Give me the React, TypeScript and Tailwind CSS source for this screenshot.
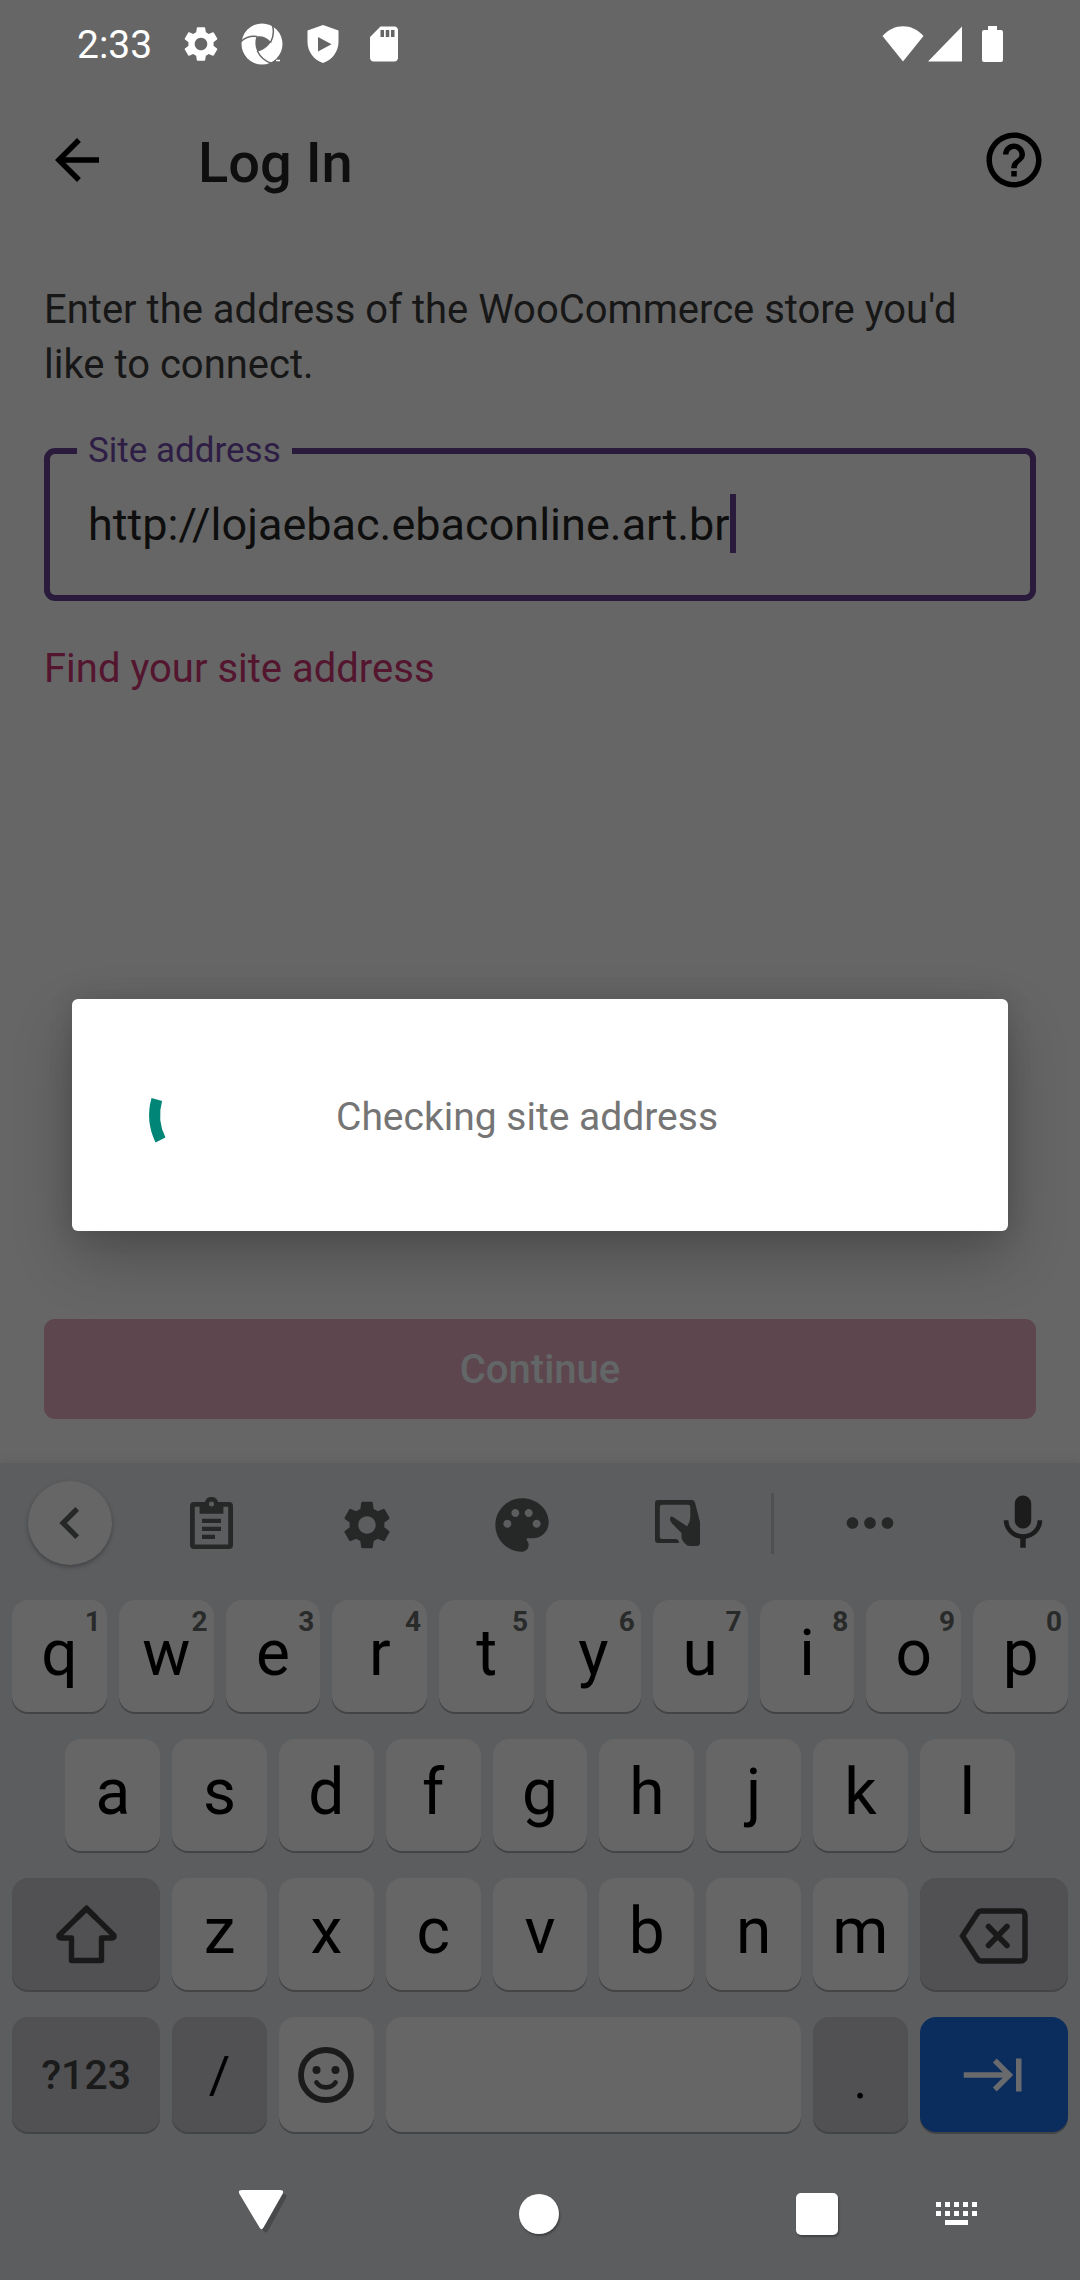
import React from "react";
import {
  MdArrowBack,
  MdChevronLeft,
  MdHelpOutline,
  MdKeyboardTab,
  MdMic,
  MdMoreHoriz,
  MdPalette,
  MdSdCard,
  MdSettings,
} from "react-icons/md";

function SwirlIcon() {
  return (
    <svg width="42" height="42" viewBox="0 0 42 42" fill="none" aria-hidden="true">
      <circle cx="21" cy="21" r="20.5" fill="#fff" />
      <path d="M15.500 13.500C21 12.500 26 14.500 29.800 19C27 23.500 22 27.500 16.500 28.500C14 24 13.800 18 15.500 13.500Z" fill="#666" />
      <path d="M0 18.500C5 14 11 12.600 16 13.600M29.500 19.600C32.300 14.500 33 8 31.500 2.500M16.300 28C19 33.500 24 38.500 31 40.500" stroke="#666" strokeWidth="1.500" />
      <path d="M35 37.500H39" stroke="#fff" strokeWidth="1.500" />
    </svg>
  );
}

function ShieldPlayIcon() {
  return (
    <svg width="42" height="42" viewBox="0 0 42 42" aria-hidden="true">
      <path
        fill="#fff"
        fillRule="evenodd"
        d="M21 2L36.500 7.500V19C36.500 28 30.500 37 21 40C11.500 37 5.500 28 5.500 19V7.500ZM16 14V28.500L29.500 21.200Z"
      />
    </svg>
  );
}

function StatusBar() {
  return (
    <header className="flex h-[83px] items-center pl-[77px] pr-[77px] pt-1 text-white">
      <time className="pt-0.5 text-[39px] leading-[44px]">2:33</time>
      <div className="ml-7 flex items-center gap-[19px]">
        <MdSettings size={42} />
        <SwirlIcon />
        <ShieldPlayIcon />
        <MdSdCard size={42} />
      </div>
      <div className="ml-auto flex items-center">
        <svg width="42" height="36" viewBox="0 0 42 36" fill="currentColor" aria-label="Wi-Fi">
          <path d="M0.500 10C12-3 30-3 41.500 10L21 35.500Z" />
        </svg>
        <svg className="ml-1" width="34" height="36" viewBox="0 0 34 36" fill="currentColor" aria-label="Signal">
          <path d="M0 35.500H34V0.500Z" />
        </svg>
        <svg className="ml-5" width="21" height="36" viewBox="0 0 21 36" fill="currentColor" aria-label="Battery">
          <path d="M6 0H15V4H19A2 2 0 0 1 21 6V34A2 2 0 0 1 19 36H2A2 2 0 0 1 0 34V6A2 2 0 0 1 2 4H6Z" />
        </svg>
      </div>
    </header>
  );
}

function ClipboardIcon() {
  return (
    <svg width="43" height="52" viewBox="0 0 43 52" fill="currentColor" fillRule="evenodd" aria-hidden="true">
      <path d="M4 5H15A6.700 6.700 0 0 1 28 5H39A4 4 0 0 1 43 9V48A4 4 0 0 1 39 52H4A4 4 0 0 1 0 48V9A4 4 0 0 1 4 5ZM4.800 9.700V47.500H38.200V9.700H33.400V16.700H9.600V9.700ZM21.500 4.500A2.500 2.500 0 1 0 21.500 9.500A2.500 2.500 0 1 0 21.500 4.500Z" />
      <path d="M12 21.700H31V26H12ZM12 29.700H31V34H12ZM12 37.700H25V42H12Z" />
    </svg>
  );
}

function HandwritingIcon() {
  return (
    <svg width="45" height="46" viewBox="0 0 45 46" fill="currentColor" fillRule="evenodd" aria-hidden="true">
      <path d="M3 0H37Q39.500 0 40 2.500L45 22V42.500Q45 46 41.500 46H35Q32 46 30 43.500Q26.500 40 26.500 37V33L17 23.500Q15 21.500 15 19Q15 15.500 18 17L32 26.300Q35.300 22 35.300 17V7Q35.300 4.700 33 4.700H7.300Q4.800 4.700 4.800 7V36.500Q4.800 39 7.300 39H21Q24 39.500 24 43H3Q0 43 0 40V3Q0 0 3 0Z" />
    </svg>
  );
}

function ShiftIcon() {
  return (
    <svg width="61" height="60" viewBox="0 0 61 60" fill="none" stroke="currentColor" strokeWidth="5.400" aria-hidden="true">
      <path strokeLinejoin="round" d="M30.500 4.500L58 31.500Q58.500 34 56 34H45.500V56.500H15.500V34H5Q2.500 34 3 31.500Z" />
      <path d="M20.500 14.300L30.500 4.500L40.500 14.300" />
    </svg>
  );
}

function BackspaceIcon() {
  return (
    <svg width="69" height="56" viewBox="0 0 69 56" fill="none" stroke="currentColor" strokeWidth="5.500" aria-hidden="true">
      <path d="M22 3H62A4 4 0 0 1 66 7V49A4 4 0 0 1 62 53H22Q20 53 18.500 51L3.500 28L18.500 5Q20 3 22 3Z" />
      <path strokeLinecap="round" d="M29.500 18.500L48 37.500M48 18.500L29.500 37.500" />
    </svg>
  );
}

function SmileIcon() {
  return (
    <svg width="56" height="56" viewBox="0 0 56 56" fill="none" stroke="currentColor" aria-hidden="true">
      <circle cx="28" cy="28" r="25" strokeWidth="5.800" />
      <circle cx="18.500" cy="23" r="4" fill="currentColor" stroke="none" />
      <circle cx="37.500" cy="23" r="4" fill="currentColor" stroke="none" />
      <path strokeWidth="4.800" strokeLinecap="round" d="M18.500 35.500C23 42 33 42 37.500 35.500" />
    </svg>
  );
}

type KeyProps = { label: string; className: string; children?: React.ReactNode };

function Key({ label, className, children }: KeyProps) {
  return (
    <button
      type="button"
      aria-label={label}
      className={`relative mx-1.5 flex items-center justify-center rounded-2xl shadow-[0_2px_0_#434445] ${className}`}
    >
      {children}
    </button>
  );
}

function LetterKey({ letter, hint, start }: { letter: string; hint?: string; start?: boolean }) {
  return (
    <Key
      label={letter}
      className={`h-28 bg-[#666] pb-1 text-[64px] leading-[64px] text-black ${start ? "col-span-2 col-start-2" : "col-span-2"}`}
    >
      {letter}
      {hint && (
        <span className="absolute right-1.5 top-2 text-[28px] font-bold leading-7 text-[#292a2a]">{hint}</span>
      )}
    </Key>
  );
}

function ToolButton({ label, className, children }: KeyProps) {
  return (
    <button type="button" aria-label={label} className={`flex h-[84px] items-center justify-center ${className}`}>
      {children}
    </button>
  );
}

function Keyboard() {
  return (
    <section
      aria-label="Keyboard"
      className="bg-[#5c5d5f] pb-4 pt-[18px] text-[#262827] shadow-[0_-2px_10px_rgba(0,0,0,0.06)]"
    >
      <div className="flex items-center pl-7">
        <ToolButton label="Back" className="w-[84px] rounded-full bg-[#666] shadow-[0_2px_4px_rgba(0,0,0,0.3)]">
          <MdChevronLeft size={64} />
        </ToolButton>
        <div className="ml-[22px] flex flex-1">
          <ToolButton label="Clipboard" className="flex-1">
            <ClipboardIcon />
          </ToolButton>
          <ToolButton label="Settings" className="flex-1 pt-1">
            <MdSettings size={58} />
          </ToolButton>
          <ToolButton label="Themes" className="flex-1 pt-1">
            <MdPalette size={64} />
          </ToolButton>
          <ToolButton label="Handwriting" className="flex-1">
            <HandwritingIcon />
          </ToolButton>
        </div>
        <div className="ml-4 h-[61px] w-[3px] bg-[#4f5052]" />
        <ToolButton label="More" className="w-48">
          <MdMoreHoriz size={70} />
        </ToolButton>
        <ToolButton label="Voice input" className="w-[114px] text-[#1c1c1c]">
          <MdMic size={66} />
        </ToolButton>
      </div>

      <div className="mt-[35px] flex flex-col gap-[27px] px-1.5">
        <div className="grid grid-cols-20">
          {"qwertyuiop".split("").map((c, i) => (
            <LetterKey key={c} letter={c} hint={String((i + 1) % 10)} />
          ))}
        </div>
        <div className="grid grid-cols-20">
          {"asdfghjkl".split("").map((c, i) => (
            <LetterKey key={c} letter={c} start={i === 0} />
          ))}
        </div>
        <div className="grid grid-cols-20 text-[#191919]">
          <Key label="Shift" className="col-span-3 bg-[#515153]">
            <ShiftIcon />
          </Key>
          {"zxcvbnm".split("").map((c) => (
            <LetterKey key={c} letter={c} />
          ))}
          <Key label="Backspace" className="col-span-3 bg-[#515153] pt-1">
            <BackspaceIcon />
          </Key>
        </div>
        <div className="grid h-[115px] grid-cols-20 text-[#1b1b1b]">
          <Key label="Symbols" className="col-span-3 bg-[#515153] pt-0.5 text-[41px] font-medium">
            ?123
          </Key>
          <Key label="Slash" className="col-span-2 bg-[#515153] pt-0.5 text-[52px] text-black">
            /
          </Key>
          <Key label="Emoji" className="col-span-2 bg-[#666]">
            <SmileIcon />
          </Key>
          <Key label="Space" className="col-span-8 bg-[#666]" />
          <Key label="Period" className="col-span-2 bg-[#515153] pt-3 text-[52px] text-black">
            .
          </Key>
          <Key label="Next" className="col-span-3 bg-[#0a2d5e] text-[#686a6d]">
            <MdKeyboardTab size={66} />
          </Key>
        </div>
      </div>
    </section>
  );
}

function NavButton({ label, children }: { label: string; children: React.ReactNode }) {
  return (
    <button type="button" aria-label={label} className="flex size-11 items-center justify-center">
      {children}
    </button>
  );
}

function NavigationBar() {
  return (
    <nav aria-label="System" className="flex h-[132px] items-center bg-[#5c5d5f] pl-[239px] pr-[102px] text-white">
      <div className="flex flex-1 items-center justify-between">
        <NavButton label="Hide keyboard">
          <svg className="overflow-visible" width="44" height="46" viewBox="1 2 44 46">
            <path fill="#48494a" d="M8 5H46Q50 5 48 9L30 42Q27.500 45 25.500 42L6 9Z" />
            <path fill="#fff" d="M4 1H42Q46.500 1 44.500 5L25.500 38.500Q23.500 42 21.500 38.500L1.500 5Q-0.500 1 4 1Z" />
          </svg>
        </NavButton>
        <NavButton label="Home">
          <span className="size-10 rounded-full bg-white shadow-[1px_2px_2px_rgba(0,0,0,0.3)]" />
        </NavButton>
        <NavButton label="Recent apps">
          <span className="size-[42px] rounded-[5px] bg-white shadow-[1px_2px_2px_rgba(0,0,0,0.3)]" />
        </NavButton>
      </div>
      <button type="button" aria-label="Switch keyboard" className="ml-[97px]">
        <svg width="42" height="24" viewBox="0 0 42 24" fill="currentColor">
          {[0, 9, 18, 27, 36].map((x) => (
            <g key={x}>
              <rect x={x} y="0" width="5" height="5" />
              <rect x={x} y="9" width="5" height="5" />
            </g>
          ))}
          <rect x="9" y="18" width="23" height="5" />
        </svg>
      </button>
    </nav>
  );
}

function ProgressDialog() {
  return (
    <div className="absolute inset-0 flex items-center px-[72px] pb-[134px] pt-[83px]">
      <div
        role="dialog"
        aria-modal="true"
        aria-label="Checking site address"
        className="flex h-[232px] flex-1 items-center rounded-[6px] bg-white pl-[66px] shadow-[0_26px_60px_rgba(0,0,0,0.24),0_0_24px_rgba(0,0,0,0.12)]"
      >
        <svg width="110" height="110" viewBox="0 0 110 110" fill="none" role="progressbar" aria-label="Loading">
          <path d="M18.800 39.500A57 57 0 0 0 22.500 80" stroke="#008577" strokeWidth="11" />
        </svg>
        <p className="ml-[88px] pt-1 text-[39px] leading-[46px] text-[#757575]">Checking site address</p>
      </div>
    </div>
  );
}

export default function App() {
  return (
    <div className="relative flex min-h-screen flex-col bg-[#666] font-[Roboto,sans-serif]">
      <StatusBar />

      <div className="flex h-[154px] items-center pl-11 pr-[33px] text-black">
        <button type="button" aria-label="Back">
          <MdArrowBack size={66} />
        </button>
        <h1 className="ml-[88px] pt-1.5 text-[56px] font-medium leading-[64px] text-[#0e0e0e]">Log In</h1>
        <button type="button" aria-label="Help" className="ml-auto">
          <MdHelpOutline size={66} />
        </button>
      </div>

      <main className="flex flex-1 flex-col px-11 pb-11 pt-[45px]">
        <p className="pr-16 text-[40px] leading-[55px] text-[#171717]">
          Enter the address of the WooCommerce store you'd like to connect.
        </p>

        <fieldset className="mt-[39px] h-[170px] min-w-0 rounded-[11px] border-[6px] border-[#2a1b3d] px-[27px]">
          <legend className="px-[11px] text-[35px] leading-10 text-[#2e1d45]">
            <label htmlFor="site-address">Site address</label>
          </legend>
          <div className="flex items-center px-[11px] pt-5">
            <input
              id="site-address"
              type="text"
              defaultValue="http://lojaebac.ebaconline.art.br"
              className="field-sizing-content bg-transparent pt-1 text-[45px] leading-[60px] text-[#0e0e0e] outline-none"
            />
            <span className="h-[59px] w-1.5 bg-[#2a1b3d]" />
          </div>
        </fieldset>

        <a href="#find" className="mt-10 self-start text-[40px] leading-[55px] text-[#54152f]">
          Find your site address
        </a>

        <button
          type="button"
          disabled
          className="mt-auto h-[100px] rounded-[11px] bg-[#5d464e] pt-0.5 text-[40px] font-medium text-[#636666]"
        >
          Continue
        </button>
      </main>

      <Keyboard />
      <NavigationBar />
      <ProgressDialog />
    </div>
  );
}
